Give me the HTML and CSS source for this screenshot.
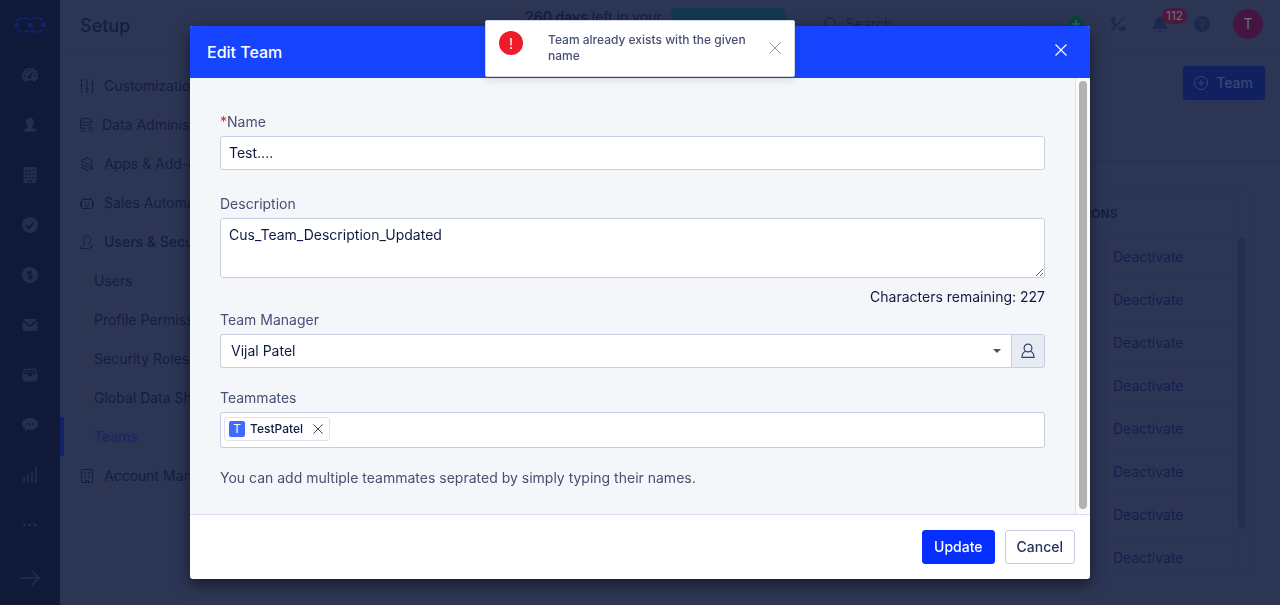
FILE: index.html
```html
<!DOCTYPE html>
<html lang="en">
<head>
<meta charset="utf-8">
<title>Setup - Teams</title>
<link rel="stylesheet" href="styles.css">
</head>
<body>
<div class="app">
  <nav class="rail" aria-label="Modules">
    <a class="rail-item" href="#"><svg width="34" height="18" viewBox="0 0 34 18" class="logo"><path d="M4 5Q6 2 9 2h2q3 0 6 2 3-2 6-2h2q3 0 5 3M4 13q2 3 5 3h2q3 0 6-2 3 2 6 2h2q3 0 5-3" fill="none" stroke="currentColor" stroke-width="1.800" stroke-dasharray="6 1.5"/><circle cx="3.500" cy="9" r="2.600" fill="currentColor"/><circle cx="17" cy="9" r="2.600" fill="currentColor"/><circle cx="30.500" cy="9" r="2.600" fill="currentColor"/></svg></a>
    <a class="rail-item ruled" href="#"><svg width="16" height="16" viewBox="0 0 16 16"><path fill="currentColor" d="M3 15a8 8 0 1 1 10 0l-2.500-1.500h-5z"/><g stroke="#101937" stroke-width="1.300" stroke-linecap="round"><path d="M7.500 10 10.500 5M2.500 9h.8M12.700 9h.8M3.800 5.200l.5.500M8 2.700v.7M5.700 3.300l.2.500M12.200 6l.3-.2"/></g><circle cx="7.500" cy="10" r="1.700" fill="#101937"/></svg></a>
    <a class="rail-item" href="#"><svg width="16" height="16" viewBox="0 0 16 16"><path fill="currentColor" d="M8 1c2.600 0 4 1.700 4 4.200 0 2-.8 3.300-1.700 4.300v1.200c1 .9 4.200 1.100 4.200 3.300v.5h-13V14c0-2.200 3.200-2.400 4.200-3.300V9.500C4.800 8.500 4 7.200 4 5.200 4 2.700 5.400 1 8 1z"/></svg></a>
    <a class="rail-item" href="#"><svg width="16" height="18" viewBox="0 0 16 18"><rect x="1.500" y="1" width="13" height="16" rx="1.500" fill="currentColor"/><g fill="#101937"><path d="M3.500 4h2v1.600h-2zM7 4h2v1.600H7zM10.500 4h2v1.600h-2zM3.500 7.500h2v1.600h-2zM7 7.500h2v1.600H7zM10.500 7.500h2v1.600h-2zM3.500 11h2v1.600h-2zM7 11h2v1.600H7zM10.500 11h2v1.600h-2zM6 14.500h4V16H6z"/></g></svg></a>
    <a class="rail-item" href="#"><svg width="16" height="16" viewBox="0 0 16 16"><circle cx="8" cy="8" r="8" fill="currentColor"/><path d="M4 8.200 7 11l5-5.800" fill="none" stroke="#101937" stroke-width="1.600"/></svg></a>
    <a class="rail-item ruled" href="#"><svg width="16" height="16" viewBox="0 0 16 16"><circle cx="8" cy="8" r="8" fill="currentColor"/><path d="M10 6c-.2-1-1-1.400-2-1.400S6 5.100 6 6.200C6 8.300 10 7.400 10 9.700c0 1.100-.9 1.700-2 1.700s-2-.5-2.100-1.600M8 3.300v9.400" fill="none" stroke="#101937" stroke-width="1.300"/></svg></a>
    <a class="rail-item" href="#"><svg width="16" height="14" viewBox="0 0 16 14"><path fill="currentColor" d="M.5 1h15L8 7.500zM.5 3 8 9.200 15.500 3v8.500q0 1.500-1.500 1.500H2Q.5 13 .5 11.500z"/></svg></a>
    <a class="rail-item" href="#"><svg width="16" height="14" viewBox="0 0 16 14"><path fill="currentColor" fill-rule="evenodd" d="M2 .5h12l1.500 5v6q0 2-2 2h-11q-2 0-2-2v-6zM3 2 2 6h4q0 2.500 2 2.500T10 6h4l-1-4z"/><path stroke="currentColor" stroke-width="1.200" d="M4 4h8"/></svg></a>
    <a class="rail-item" href="#"><svg width="18" height="16" viewBox="0 0 18 16"><path fill="currentColor" d="M9 1c4.500 0 8 2.500 8 6s-3.500 6-8 6c-.8 0-1.500 0-2.200-.2L4 15.500l.4-3.500C2.300 11 1 9.200 1 7c0-3.500 3.500-6 8-6z"/><path d="M5.500 7h1.400M8.400 7h1.400M11.300 7h1.400" stroke="#101937" stroke-width="1.500"/></svg></a>
    <a class="rail-item ruled" href="#"><svg width="16" height="17" viewBox="0 0 16 17"><path d="M2 17v-6M6 17V8M10 17V5M14 17V1" stroke="currentColor" stroke-width="1.700"/></svg></a>
    <a class="rail-item" href="#"><svg width="16" height="4" viewBox="0 0 16 4" fill="currentColor"><circle cx="2.500" cy="2" r="1.600"/><circle cx="7.700" cy="2" r="1.600"/><circle cx="13" cy="2" r="1.600"/></svg></a>
    <a class="rail-item last" href="#"><svg width="22" height="16" viewBox="0 0 22 16"><path d="M1 8h19M13 1l7 7-7 7" fill="none" stroke="currentColor" stroke-width="1.600"/></svg></a>
  </nav>

  <div class="page">
    <header class="topbar">
      <h1 class="page-title">Setup</h1>
      <p class="trial"><b>260 days</b> left in your</p>
      <button class="upgrade" aria-label="Upgrade"></button>
      <div class="search">
        <svg width="14" height="14" viewBox="0 0 14 14"><circle cx="6" cy="6" r="5" fill="none" stroke="currentColor"/><path d="m10 10 3 3" stroke="currentColor"/></svg>
        <input class="search-input" type="search" placeholder="Search" aria-label="Search">
      </div>
      <div class="tools">
        <button class="tool add" aria-label="Add"><svg width="16" height="16" viewBox="0 0 16 16"><circle cx="8" cy="8" r="8" fill="currentColor"/><path d="M8 4v8M4 8h8" stroke="#2b607a" stroke-width="1.500"/></svg></button>
        <button class="tool" aria-label="Calls"><svg width="16" height="16" viewBox="0 0 16 16"><path fill="currentColor" d="M1 2l3-1.500 2 3.500-1.700 1.500L6 8.500 4.500 10C2 8 1 5 1 2zM8 12l1.500-1.500 2.500 1 1.500-1.700L16 12l-1.500 3c-2.500.3-5-.8-6.500-3z"/><path d="M14 1 1 15" stroke="currentColor" stroke-width="1.500"/></svg></button>
        <button class="tool" aria-label="Notifications"><svg width="16" height="16" viewBox="0 0 16 16"><path fill="currentColor" d="M7 1q1-1.500 2 0 4 1 4 6 0 3 2 4v2H1v-2q2-1 2-4 0-5 4-6zM6 14h4q-.5 2-2 2t-2-2z"/></svg><span class="badge">112</span></button>
        <button class="tool" aria-label="Help"><svg width="16" height="16" viewBox="0 0 16 16"><circle cx="8" cy="8" r="8" fill="currentColor"/><path d="M5.800 6.300q0-2 2.200-2t2.200 1.900Q10.200 7.500 8 8.500V10M8 11v1.600" fill="none" stroke="#2c3654" stroke-width="1.400"/></svg></button>
        <button class="avatar">T</button>
      </div>
    </header>

    <div class="columns">
      <nav class="menu" aria-label="Setup">
        <a class="menu-item" href="#"><svg width="14" height="14" viewBox="0 0 14 14"><path d="M1.500 0v14M7 0v14M12.500 0v14M0 6.500h3M5.500 9.500h3M11 4.500h3"/></svg>Customization</a>
        <a class="menu-item data" href="#"><svg width="14" height="14" viewBox="0 0 14 14"><ellipse cx="6" cy="2.500" rx="5.500" ry="2"/><path d="M.5 2.500v9q0 1.500 5.500 2M.5 5.500q0 2 5.500 2t5.500-2v-3M.5 8.500q0 2 5.500 2"/><circle cx="10.500" cy="11" r="1.800"/></svg>Data Administration</a>
        <a class="menu-item" href="#"><svg width="14" height="14" viewBox="0 0 14 14"><path d="M7 .7 13 4 7 7.300 1 4zM1 7l6 3.300L13 7M1 10l6 3.300 2-1M11.500 9v4M9.500 11h4"/></svg>Apps &amp; Add-ons</a>
        <a class="menu-item" href="#"><svg width="14" height="14" viewBox="0 0 14 14"><path d="M2.500 3.500h9l1 1v7l-1 1h-9l-1-1v-7zM3.500 3.500V1M10.500 3.500V1M.5 6v4M13.500 6v4M4 7h2M8 7h2M5 10h4"/></svg>Sales Automation</a>
        <a class="menu-item strong" href="#"><svg width="14" height="14" viewBox="0 0 14 14"><path d="M9 13.500H.5q0-2.500 2-3l2.500-.8V9Q3.500 7.500 3.500 4.500 3.500.7 7 .7t3.500 3.800Q10.500 7.500 9 9v1M9 11.500l1.700 1.800L13.500 10"/></svg>Users &amp; Security</a>
        <a class="menu-item sub" href="#">Users</a>
        <a class="menu-item sub" href="#">Profile Permissions</a>
        <a class="menu-item sub" href="#">Security Roles</a>
        <a class="menu-item sub" href="#">Global Data Sharing</a>
        <a class="menu-item sub active" href="#">Teams</a>
        <a class="menu-item" href="#"><svg width="14" height="14" viewBox="0 0 14 14"><path d="M1.500.5h11v13h-11zM4 3.500h2M8 3.500h2M4 6h2M8 6h2M4 8.500h2M8 8.500h2M5.500 13.500v-2h3v2"/></svg>Account Management</a>
      </nav>

      <main class="content">
        <div class="content-head">
          <button class="new-team"><svg width="14" height="14" viewBox="0 0 14 14" fill="none" stroke="currentColor"><circle cx="7" cy="7" r="6.500"/><path d="M7 4v6M4 7h6"/></svg>Team</button>
        </div>
        <div class="list">
          <table class="teams">
            <colgroup><col><col class="col-edit"><col class="col-off"></colgroup>
            <thead><tr><th></th><th colspan="2">ACTIONS</th></tr></thead>
            <tbody>
              <tr><td></td><td></td><td><a href="#">Deactivate</a></td></tr>
              <tr><td></td><td></td><td><a href="#">Deactivate</a></td></tr>
              <tr><td></td><td></td><td><a href="#">Deactivate</a></td></tr>
              <tr><td></td><td></td><td><a href="#">Deactivate</a></td></tr>
              <tr><td></td><td></td><td><a href="#">Deactivate</a></td></tr>
              <tr><td></td><td></td><td><a href="#">Deactivate</a></td></tr>
              <tr><td></td><td></td><td><a href="#">Deactivate</a></td></tr>
              <tr><td></td><td></td><td><a href="#">Deactivate</a></td></tr>
            </tbody>
          </table>
          <div class="list-track"><div class="list-thumb"></div></div>
        </div>
      </main>
    </div>
  </div>
</div>

<div class="overlay">
  <form class="modal" role="dialog" aria-labelledby="dialog-title">
    <header class="modal-head">
      <h2 class="modal-title" id="dialog-title">Edit Team</h2>
      <button class="close" type="button" aria-label="Close"><svg width="12" height="12" viewBox="0 0 12 12"><path d="m.5.5 11 11M11.500.5l-11 11" stroke="currentColor" stroke-width="1.100"/></svg></button>
    </header>
    <div class="modal-body">
      <div class="fields">
        <div class="field name">
          <label class="label" for="name"><span class="required">*</span>Name</label>
          <input class="control" id="name" type="text" value="Test....">
        </div>
        <div class="field">
          <label class="label" for="description">Description</label>
          <textarea class="control area" id="description">Cus_Team_Description_Updated</textarea>
        </div>
        <p class="remaining">Characters remaining: 227</p>
        <div class="field manager">
          <label class="label" for="manager">Team Manager</label>
          <div class="picker">
            <select class="control select" id="manager"><option>Vijal Patel</option></select>
            <span class="caret"></span>
            <button class="lookup" type="button" aria-label="Find user"><svg width="14" height="16" viewBox="0 0 14 16" fill="none" stroke="currentColor" stroke-width="1.200"><circle cx="7" cy="5" r="3.900"/><path d="M4.500 8.300C2 9.300 1 11 1 14.300h12c0-3.300-1-5-3.500-6"/></svg></button>
          </div>
        </div>
        <div class="field">
          <label class="label" for="mates">Teammates</label>
          <div class="tags">
            <span class="tag"><span class="tag-initial">T</span><span class="tag-name">TestPatel</span><button class="tag-remove" type="button" aria-label="Remove TestPatel"><svg width="10" height="10" viewBox="0 0 10 10"><path d="m.4.400 9.200 9.200M9.600.400.400 9.600" stroke="currentColor"/></svg></button></span>
            <input class="tags-input" id="mates" type="text">
          </div>
        </div>
        <p class="hint">You can add multiple teammates seprated by simply typing their names.</p>
      </div>
      <div class="track"><div class="thumb"></div></div>
    </div>
    <footer class="modal-foot">
      <button class="btn primary" type="submit">Update</button>
      <button class="btn" type="button">Cancel</button>
    </footer>
  </form>
</div>

<div class="toast" role="alert">
  <span class="toast-icon">!</span>
  <p class="toast-text">Team already exists with the given name</p>
  <button class="toast-close" aria-label="Dismiss"><svg width="12" height="12" viewBox="0 0 12 12"><path d="m.5.5 11 11M11.500.5l-11 11" stroke="currentColor"/></svg></button>
</div>
</body>
</html>
```

FILE: styles.css
```css
* { box-sizing: border-box; }
body {
  margin: 0;
  overflow: hidden;
  background: #2c3654;
  color: #141d42;
  font: 14px/20px Inter, "Liberation Sans", sans-serif;
}
h1, h2, p { margin: 0; }
a { color: inherit; text-decoration: none; }
button {
  padding: 0;
  border: 0;
  background: none;
  color: inherit;
  font: inherit;
}
svg { display: block; flex: none; }

/* Application shell */
.app { display: flex; height: 100vh; overflow: hidden; }
.rail {
  display: flex;
  flex: 0 0 60px;
  flex-direction: column;
  padding: 0 10px;
  background: #101937;
  color: #232e4e;
}
.rail-item {
  display: flex;
  flex: 0 0 50px;
  align-items: center;
  justify-content: center;
}
.rail-item.ruled { border-bottom: 1px solid #131c39; }
.rail-item.last { flex-basis: 56px; margin-top: auto; }
.logo { color: #12226b; }
.page { flex: 1; min-width: 0; }

.topbar {
  display: flex;
  align-items: center;
  height: 51px;
  padding: 0 17px 2px 20px;
  border-bottom: 1px solid #293351;
}
.page-title { flex: 0 0 445px; padding-top: 4px; font-size: 18px; font-weight: 500; }
.trial { align-self: flex-start; padding-top: 7px; white-space: nowrap; }
.trial b { font-weight: 600; }
.upgrade {
  width: 115px;
  height: 32px;
  margin-left: 9px;
  border-radius: 3px;
  background: #14384d;
}
.search {
  display: flex;
  align-items: center;
  gap: 8px;
  width: 210px;
  height: 32px;
  margin-left: 30px;
  padding: 0 8px;
  background: #2b3553;
}
.search-input {
  width: 100%;
  min-width: 0;
  padding: 0;
  border: 0;
  background: none;
  font: inherit;
}
.search-input::placeholder { color: #19234a; }
.tools {
  display: flex;
  align-items: center;
  gap: 26px;
  margin-left: auto;
  color: #1c284c;
}
.tool { position: relative; }
.add { color: #10403c; }
.badge {
  position: absolute;
  top: -8px;
  left: 10px;
  padding: 0 4px;
  border-radius: 8px;
  background: #4a1a3a;
  color: #66708c;
  font-size: 12px;
  line-height: 16px;
}
.avatar {
  width: 30px;
  height: 30px;
  margin-left: -3px;
  border-radius: 50%;
  background: #451541;
  color: #69708c;
}

.columns { display: flex; }
.menu { flex: 0 0 320px; padding-top: 15px; }
.menu-item {
  display: flex;
  align-items: center;
  gap: 10px;
  height: 39px;
  padding-left: 20px;
  white-space: nowrap;
}
.menu-item.data { gap: 8px; }
.menu-item svg { fill: none; stroke: currentColor; }
.menu-item.strong { font-weight: 500; }
.menu-item.sub { padding-left: 34px; }
.menu-item.active {
  padding-left: 30px;
  border-left: 4px solid #12226b;
  color: #15246a;
}
.content { flex: 1; min-width: 0; }
.content-head {
  display: flex;
  justify-content: flex-end;
  height: 110px;
  padding: 15px;
  border-bottom: 1px solid #273150;
}
.new-team {
  display: flex;
  align-items: center;
  gap: 8px;
  height: 34px;
  padding: 0 12px 0 11px;
  border-radius: 3px;
  background: #102061;
  color: #3b4775;
  font-weight: 500;
}
.list {
  display: flex;
  height: 384px;
  margin: 30px 30px 0;
  overflow: hidden;
  border: 1px solid #2a3452;
}
.teams { flex: 1; border-collapse: collapse; table-layout: fixed; }
.col-edit { width: 50px; }
.col-off { width: 128px; }
.teams th, .teams td {
  height: 43px;
  padding: 0 7px;
  border: 1px solid #2a3452;
  text-align: left;
}
.teams th { font-size: 12px; font-weight: 600; }
.teams a { color: #151e50; }
.list-track { padding: 46px 3px 0 4px; }
.list-thumb { width: 8px; height: 291px; border-radius: 4px; background: #252e50; }

/* Dialog */
.overlay { position: fixed; inset: 0; padding: 26px; }
.modal {
  max-width: 900px;
  margin: 0 auto;
  overflow: hidden;
  border-radius: 3px;
  background: #fff;
  box-shadow: 0 5px 15px rgba(0, 0, 0, .5);
  color: #0f1a42;
}
.modal-head {
  display: flex;
  align-items: center;
  justify-content: space-between;
  height: 52px;
  padding: 0 23px 4px 17px;
  background: #1744ff;
  color: #fff;
}
.modal-title { padding-top: 4px; font-size: 16px; font-weight: 500; }
.modal-body { display: flex; border-bottom: 1px solid #d9dfec; background: #f5f6fa; }
.fields { flex: 1; min-width: 0; padding: 34px 30px 26px; }
.field { display: flex; flex-direction: column; gap: 4px; }
.name { margin-bottom: 24px; }
.manager { margin: 3px 0 20px; }
.label, .hint { color: #474f73; }
.required { color: #ee1b24; }
.control {
  width: 100%;
  height: 34px;
  margin: 0;
  padding: 0 8px 2px;
  border: 1px solid #c8cfe0;
  border-radius: 3px;
  background: #fff;
  color: inherit;
  font: inherit;
}
.area { height: 60px; padding: 6px 8px; resize: vertical; }
.remaining { margin-top: 9px; text-align: right; }
.picker { display: grid; grid-template-columns: 1fr 34px; }
.select {
  grid-area: 1 / 1;
  padding: 0 10px;
  border-right: 0;
  border-radius: 3px 0 0 3px;
  appearance: none;
}
.caret {
  grid-area: 1 / 1;
  place-self: center end;
  margin-right: 10px;
  border: 4px solid transparent;
  border-top-color: #474f73;
  border-bottom: 0;
  pointer-events: none;
}
.lookup {
  display: grid;
  place-items: center;
  border: 1px solid #c8cfe0;
  border-radius: 0 3px 3px 0;
  background: #e7ebf4;
  color: #39426a;
}
.tags {
  display: flex;
  height: 36px;
  padding: 4px 3px;
  border: 1px solid #c5cbe0;
  border-radius: 3px;
  background: #fff;
}
.tag {
  display: flex;
  align-items: center;
  height: 24px;
  padding: 0 6px 0 4px;
  border: 1px solid #dfe2f0;
  border-radius: 3px;
  font-size: 12px;
  font-weight: 500;
}
.tag-initial {
  width: 16px;
  margin-right: 5px;
  border-radius: 2px;
  background: #416bff;
  color: #fff;
  font-weight: 400;
  line-height: 16px;
  text-align: center;
}
.tag-remove { margin-left: 10px; color: #39426a; }
.tags-input { flex: 1; min-width: 0; border: 0; background: none; font: inherit; }
.hint { margin-top: 20px; }
.track {
  display: flex;
  flex: 0 0 15px;
  padding: 3px 3px 5px;
  border-left: 1px solid #e0e1e5;
  background: #fafafa;
}
.thumb { width: 8px; border-radius: 4px; background: #b2b2b2; }
.modal-foot { display: flex; justify-content: flex-end; gap: 10px; padding: 15px; }
.btn {
  height: 34px;
  padding: 0 11px;
  border: 1px solid #c8cde0;
  border-radius: 3px;
  background: #fff;
  color: #29325a;
  font-weight: 500;
}
.primary { border-color: #062fff; background: #062fff; color: #fff; }

/* Notification above the dialog */
.toast {
  position: fixed;
  top: 20px;
  left: 50%;
  display: flex;
  width: 310px;
  margin-left: -155px;
  padding: 10px 13px 12px;
  border: 1px solid #d0d7ea;
  border-radius: 2px;
  background: #fff;
  box-shadow: 0 3px 8px rgba(0, 0, 0, .12);
  color: #474f73;
}
.toast-icon {
  flex: none;
  width: 24px;
  height: 24px;
  margin-right: 25px;
  border-radius: 50%;
  background: #ee1b2b;
  color: #fff;
  line-height: 25px;
  text-align: center;
}
.toast-text { flex: 1; padding-top: 1px; font-size: 12px; font-weight: 500; line-height: 16px; }
.toast-close { margin-left: 12px; color: #8f96af; }
```
